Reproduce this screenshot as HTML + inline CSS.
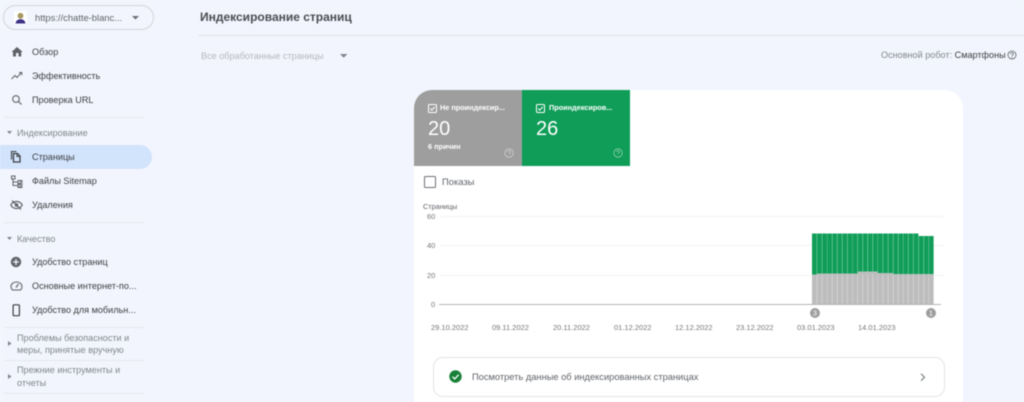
<!DOCTYPE html>
<html lang="ru"><head><meta charset="utf-8"><title>Индексирование страниц</title>
<style>
html,body{margin:0;padding:0;width:1024px;height:402px;overflow:hidden;background:#f2f5fd}
#p{position:relative;width:1024px;height:402px;overflow:hidden;background:#f2f5fd;font-family:"Liberation Sans",sans-serif;filter:blur(.4px)}
.t{position:absolute;white-space:nowrap;line-height:14px;font-size:9.1px;color:#3c4043}
.s{color:#80868b}
.l{position:absolute;height:1px;background:#e6e8ee}
.a{position:absolute}
svg{position:absolute;overflow:visible}
</style></head><body><div id="p">

<div class="a" style="left:3px;top:5px;width:149px;height:23px;border:1px solid #d2d5da;border-radius:13px"></div>
<div class="a" style="left:14px;top:11px;width:13px;height:13px;background:#fff"></div>
<svg style="left:14px;top:11px" width="13" height="13"><circle cx="6.500" cy="4.800" r="2.900" fill="#a8965f"/><path d="M1.500 12.500c.5-3 2.200-4.300 5-4.300s4.500 1.300 5 4.300z" fill="#3c2f86"/></svg>
<span class="t" style="left:35px;top:11px;font-size:9.400px;color:#5f6368">https://chatte-blanc...</span>
<svg style="left:132px;top:16px" width="8" height="4"><path d="M0 0h7L3.500 3.500z" fill="#6d7175"/></svg>

<svg style="left:11px;top:46px" width="12" height="12"><path d="M5 10.500V7h2.500v3.500h2.700V6h1.500L6 1 .5 6H2v4.500z" fill="#5f6368"/></svg>
<span class="t" style="left:32px;top:45px">Обзор</span>
<svg style="left:11px;top:70px" width="12" height="12"><path d="M.5 9l3.500-3.500 2 2L10 3M8 2.500h2.800v2.800" fill="none" stroke="#5f6368" stroke-width="1"/></svg>
<span class="t" style="left:32px;top:69px">Эффективность</span>
<svg style="left:11px;top:94px" width="12" height="12"><circle cx="5" cy="5" r="3.300" fill="none" stroke="#5f6368" stroke-width="1.100"/><path d="M7.500 7.500l3 3" stroke="#5f6368" stroke-width="1.200"/></svg>
<span class="t" style="left:32px;top:93px">Проверка URL</span>
<div class="l" style="left:4px;top:117px;width:141px"></div>

<svg style="left:7px;top:131px" width="5" height="4"><path d="M0 0h5L2.500 3z" fill="#80868b"/></svg>
<span class="t s" style="left:17px;top:126px">Индексирование</span>
<div class="a" style="left:0;top:145px;width:152px;height:24px;background:#d2e3fc;border-radius:0 12px 12px 0"></div>
<svg style="left:10px;top:150px" width="12" height="13"><path d="M1.500 9.500V1.500h5" fill="none" stroke="#3c4043" stroke-width="1.100"/><path d="M3.500 3.500h4l2.500 2.500v6h-6.500z" fill="none" stroke="#3c4043" stroke-width="1.300"/><path d="M7 3.500v3h3" fill="none" stroke="#3c4043" stroke-width="1"/></svg>
<span class="t" style="left:32px;top:150px">Страницы</span>
<svg style="left:11px;top:175px" width="12" height="13"><path d="M.5 1h3.500v3H.5zM7 5.500h2.500v3H7zM7 9.500h2.500v2.500H7zM2 4v6.500h5M2 7h5" fill="none" stroke="#5f6368" stroke-width="1"/><path d="M7 5.500h4v7H7z" fill="none" stroke="#5f6368" stroke-width=".9"/></svg>
<span class="t" style="left:32px;top:174px">Файлы Sitemap</span>
<svg style="left:10px;top:199px" width="13" height="12"><path d="M.8 6C2 3.600 4 2.500 6.500 2.500S11 3.600 12.200 6C11 8.400 9 9.500 6.500 9.500S2 8.400 .8 6z" fill="none" stroke="#5f6368" stroke-width="1.200"/><circle cx="6.500" cy="6" r="1.800" fill="#5f6368"/><path d="M2 1.500l9 9" stroke="#5f6368" stroke-width="1.200"/></svg>
<span class="t" style="left:32px;top:198px">Удаления</span>
<div class="l" style="left:4px;top:222px;width:141px"></div>

<svg style="left:7px;top:237px" width="5" height="4"><path d="M0 0h5L2.500 3z" fill="#80868b"/></svg>
<span class="t s" style="left:17px;top:232px">Качество</span>
<svg style="left:10px;top:256px" width="12" height="12"><circle cx="6" cy="6" r="5.200" fill="#5f6368"/><path d="M3 6h6M6 3v6" stroke="#f2f5fd" stroke-width="1.300"/></svg>
<span class="t" style="left:32px;top:255px">Удобство страниц</span>
<svg style="left:10px;top:280px" width="13" height="12"><path d="M2.500 10C1.500 9 1 8 1 6.500a5.500 4.500 0 0 1 11 0c0 1.500-.5 2.500-1.500 3.500z" fill="none" stroke="#5f6368" stroke-width="1"/><path d="M6 7.500L8.500 4" stroke="#5f6368" stroke-width="1.200"/></svg>
<span class="t" style="left:32px;top:279px">Основные интернет-по...</span>
<svg style="left:12px;top:304px" width="9" height="13"><rect x="1.100" y=".8" width="6.300" height="10.900" rx="1" fill="none" stroke="#3c4043" stroke-width="1.200"/></svg>
<span class="t" style="left:32px;top:303px">Удобство для мобильн...</span>
<div class="l" style="left:4px;top:327px;width:141px"></div>

<svg style="left:8px;top:341px" width="4" height="5"><path d="M0 0l3.500 2.500L0 5z" fill="#80868b"/></svg>
<span class="t s" style="left:17px;top:331px">Проблемы безопасности и</span>
<span class="t s" style="left:17px;top:343px">меры, принятые вручную</span>
<div class="l" style="left:4px;top:360px;width:141px"></div>
<svg style="left:8px;top:374px" width="4" height="5"><path d="M0 0l3.500 2.500L0 5z" fill="#80868b"/></svg>
<span class="t s" style="left:17px;top:363px">Прежние инструменты и</span>
<span class="t s" style="left:17px;top:376px">отчеты</span>
<div class="l" style="left:4px;top:393px;width:141px"></div>

<span class="t" style="left:200px;top:9px;font-size:12px;line-height:16px;font-weight:bold;color:#4a4d51">Индексирование страниц</span>
<div class="l" style="left:198px;top:35px;width:826px;background:#dfe2e8"></div>
<span class="t" style="left:201px;top:49px;color:#b4b8bd;font-size:9.100px">Все обработанные страницы</span>
<svg style="left:340px;top:54px" width="8" height="4"><path d="M0 0h7.500L3.700 3.800z" fill="#80868b"/></svg>
<span class="t" style="left:881px;top:48px;color:#80868b;font-size:9.100px">Основной робот: <span style="color:#3c4043">Смартфоны</span></span>
<svg style="left:1007px;top:50px" width="10" height="10"><circle cx="5" cy="5" r="4" fill="none" stroke="#5f6368" stroke-width=".8"/><path d="M3.600 4c0-1.800 2.800-1.800 2.800 0 0 1-1.400 1-1.400 2.200" fill="none" stroke="#5f6368" stroke-width=".8"/><circle cx="5" cy="7.500" r=".5" fill="#5f6368"/></svg>

<div class="a" style="left:414px;top:90px;width:549px;height:330px;background:#fff;border-radius:18px 18px 0 0"></div>
<div class="a" style="left:414px;top:90px;width:108px;height:76px;background:#9e9e9e;border-radius:18px 0 0 0"></div>
<div class="a" style="left:522px;top:90px;width:108px;height:76px;background:#0f9d58"></div>

<svg style="left:428px;top:104px" width="9" height="9"><rect x=".5" y=".5" width="8" height="8" rx="1" fill="none" stroke="#fff"/><path d="M2.200 4.500l1.600 1.600 3-3.200" fill="none" stroke="#fff"/></svg>
<span class="t" style="left:440px;top:101px;color:#fff;font-size:7.300px;font-weight:bold">Не проиндексир...</span>
<span class="t" style="left:428px;top:118px;color:#fff;font-size:20px;line-height:22px">20</span>
<span class="t" style="left:428px;top:140px;color:#fff;font-size:7.300px;font-weight:bold">6 причин</span>
<svg style="left:504px;top:148px" width="10" height="10"><circle cx="5" cy="5" r="4.200" fill="none" stroke="#cfcfcf" stroke-width=".8"/><path d="M3.600 4c0-1.800 2.800-1.800 2.800 0 0 1-1.400 1-1.400 2.200" fill="none" stroke="#cfcfcf" stroke-width=".8"/></svg>

<svg style="left:536px;top:104px" width="9" height="9"><rect x=".5" y=".5" width="8" height="8" rx="1" fill="none" stroke="#fff"/><path d="M2.200 4.500l1.600 1.600 3-3.200" fill="none" stroke="#fff"/></svg>
<span class="t" style="left:549px;top:101px;color:#fff;font-size:7.300px;font-weight:bold">Проиндексиров...</span>
<span class="t" style="left:536px;top:118px;color:#fff;font-size:20px;line-height:22px">26</span>
<svg style="left:613px;top:148px" width="10" height="10"><circle cx="5" cy="5" r="4.200" fill="none" stroke="#8fd0ae" stroke-width=".8"/><path d="M3.600 4c0-1.800 2.800-1.800 2.800 0 0 1-1.400 1-1.400 2.200" fill="none" stroke="#8fd0ae" stroke-width=".8"/></svg>

<div class="a" style="left:423.500px;top:175.500px;width:10px;height:10px;border:1.200px solid #6b6f74;border-radius:1.500px"></div>
<span class="t" style="left:442px;top:175px;color:#5f6368;font-size:9.400px">Показы</span>

<span class="t" style="left:423px;top:200px;color:#5f6368;font-size:7.300px">Страницы</span>
<span class="t" style="left:427px;top:210px;color:#757575;font-size:7.500px">60</span>
<span class="t" style="left:427px;top:239px;color:#757575;font-size:7.500px">40</span>
<span class="t" style="left:427px;top:269px;color:#757575;font-size:7.500px">20</span>
<span class="t" style="left:431px;top:298px;color:#757575;font-size:7.500px">0</span>

<svg style="left:0;top:0" width="1024" height="402">
<path d="M440 216.500H944M440 245.500H944M440 275.500H944" stroke="#f3f3f3" stroke-width="1"/>
<g fill="#0f9d58">
<rect x="812" y="233.500" width="4.800" height="41"/><rect x="817.100" y="233.500" width="4.800" height="41"/><rect x="822.200" y="233.500" width="4.800" height="41"/><rect x="827.200" y="233.500" width="4.800" height="41"/><rect x="832.300" y="233.500" width="4.800" height="41"/><rect x="837.400" y="233.500" width="4.800" height="41"/><rect x="842.500" y="233.500" width="4.800" height="41"/><rect x="847.600" y="233.500" width="4.800" height="41"/><rect x="852.600" y="233.500" width="4.800" height="41"/><rect x="857.700" y="233.500" width="4.800" height="41"/><rect x="862.800" y="233.500" width="4.800" height="41"/><rect x="867.900" y="233.500" width="4.800" height="41"/><rect x="873" y="233.500" width="4.800" height="41"/><rect x="878" y="233.500" width="4.800" height="41"/><rect x="883.100" y="233.500" width="4.800" height="41"/><rect x="888.200" y="233.500" width="4.800" height="41"/><rect x="893.300" y="233.500" width="4.800" height="41"/><rect x="898.400" y="233.500" width="4.800" height="41"/><rect x="903.400" y="233.500" width="4.800" height="41"/><rect x="908.500" y="233.500" width="4.800" height="41"/><rect x="913.600" y="233.500" width="4.800" height="41"/><rect x="918.700" y="236" width="4.800" height="38"/><rect x="923.800" y="236" width="4.800" height="38"/><rect x="928.800" y="236" width="4.800" height="38"/>
</g>
<g fill="#bdbdbd">
<rect x="812" y="274.500" width="4.800" height="29.500"/><rect x="817.100" y="273.500" width="4.800" height="30.500"/><rect x="822.200" y="273.500" width="4.800" height="30.500"/><rect x="827.200" y="273.500" width="4.800" height="30.500"/><rect x="832.300" y="273.500" width="4.800" height="30.500"/><rect x="837.400" y="273.500" width="4.800" height="30.500"/><rect x="842.500" y="273.500" width="4.800" height="30.500"/><rect x="847.600" y="273.500" width="4.800" height="30.500"/><rect x="852.600" y="273.500" width="4.800" height="30.500"/><rect x="857.700" y="271.500" width="4.800" height="32.500"/><rect x="862.800" y="271.500" width="4.800" height="32.500"/><rect x="867.900" y="271.500" width="4.800" height="32.500"/><rect x="873" y="271.500" width="4.800" height="32.500"/><rect x="878" y="273" width="4.800" height="31"/><rect x="883.100" y="273" width="4.800" height="31"/><rect x="888.200" y="273" width="4.800" height="31"/><rect x="893.300" y="274" width="4.800" height="30"/><rect x="898.400" y="274" width="4.800" height="30"/><rect x="903.400" y="274" width="4.800" height="30"/><rect x="908.500" y="274" width="4.800" height="30"/><rect x="913.600" y="274" width="4.800" height="30"/><rect x="918.700" y="274" width="4.800" height="30"/><rect x="923.800" y="274" width="4.800" height="30"/><rect x="928.800" y="274" width="4.800" height="30"/>
</g>
<path d="M439 304.500H941" stroke="#b5b5b5" stroke-width="1"/>
<circle cx="815" cy="313" r="5" fill="#9e9e9e"/><circle cx="931" cy="313" r="5" fill="#9e9e9e"/>
<text x="815" y="315.500" text-anchor="middle" font-size="7" fill="#fff" font-family="Liberation Sans">3</text>
<text x="931" y="315.500" text-anchor="middle" font-size="7" fill="#fff" font-family="Liberation Sans">1</text>
</svg>

<span class="t" style="left:431px;top:321px;color:#757575;font-size:7.500px">29.10.2022</span>
<span class="t" style="left:492px;top:321px;color:#757575;font-size:7.500px">09.11.2022</span>
<span class="t" style="left:553px;top:321px;color:#757575;font-size:7.500px">20.11.2022</span>
<span class="t" style="left:614px;top:321px;color:#757575;font-size:7.500px">01.12.2022</span>
<span class="t" style="left:675px;top:321px;color:#757575;font-size:7.500px">12.12.2022</span>
<span class="t" style="left:736px;top:321px;color:#757575;font-size:7.500px">23.12.2022</span>
<span class="t" style="left:797px;top:321px;color:#757575;font-size:7.500px">03.01.2023</span>
<span class="t" style="left:858px;top:321px;color:#757575;font-size:7.500px">14.01.2023</span>

<div class="a" style="left:433px;top:357px;width:510px;height:38px;border:1px solid #e3e4e6;border-radius:10px;background:#fff"></div>
<svg style="left:449px;top:370px" width="13" height="13"><circle cx="6.500" cy="6.500" r="6.200" fill="#188038"/><path d="M3.500 6.700l2.200 2.200 4-4.200" fill="none" stroke="#fff" stroke-width="1.300"/></svg>
<span class="t" style="left:472px;top:369.500px;color:#5f6368;font-size:9.300px">Посмотреть данные об индексированных страницах</span>
<svg style="left:920px;top:373px" width="6" height="9"><path d="M1 .8L4.500 4.200 1 7.700" fill="none" stroke="#80868b" stroke-width="1.200"/></svg>

</div></body></html>
